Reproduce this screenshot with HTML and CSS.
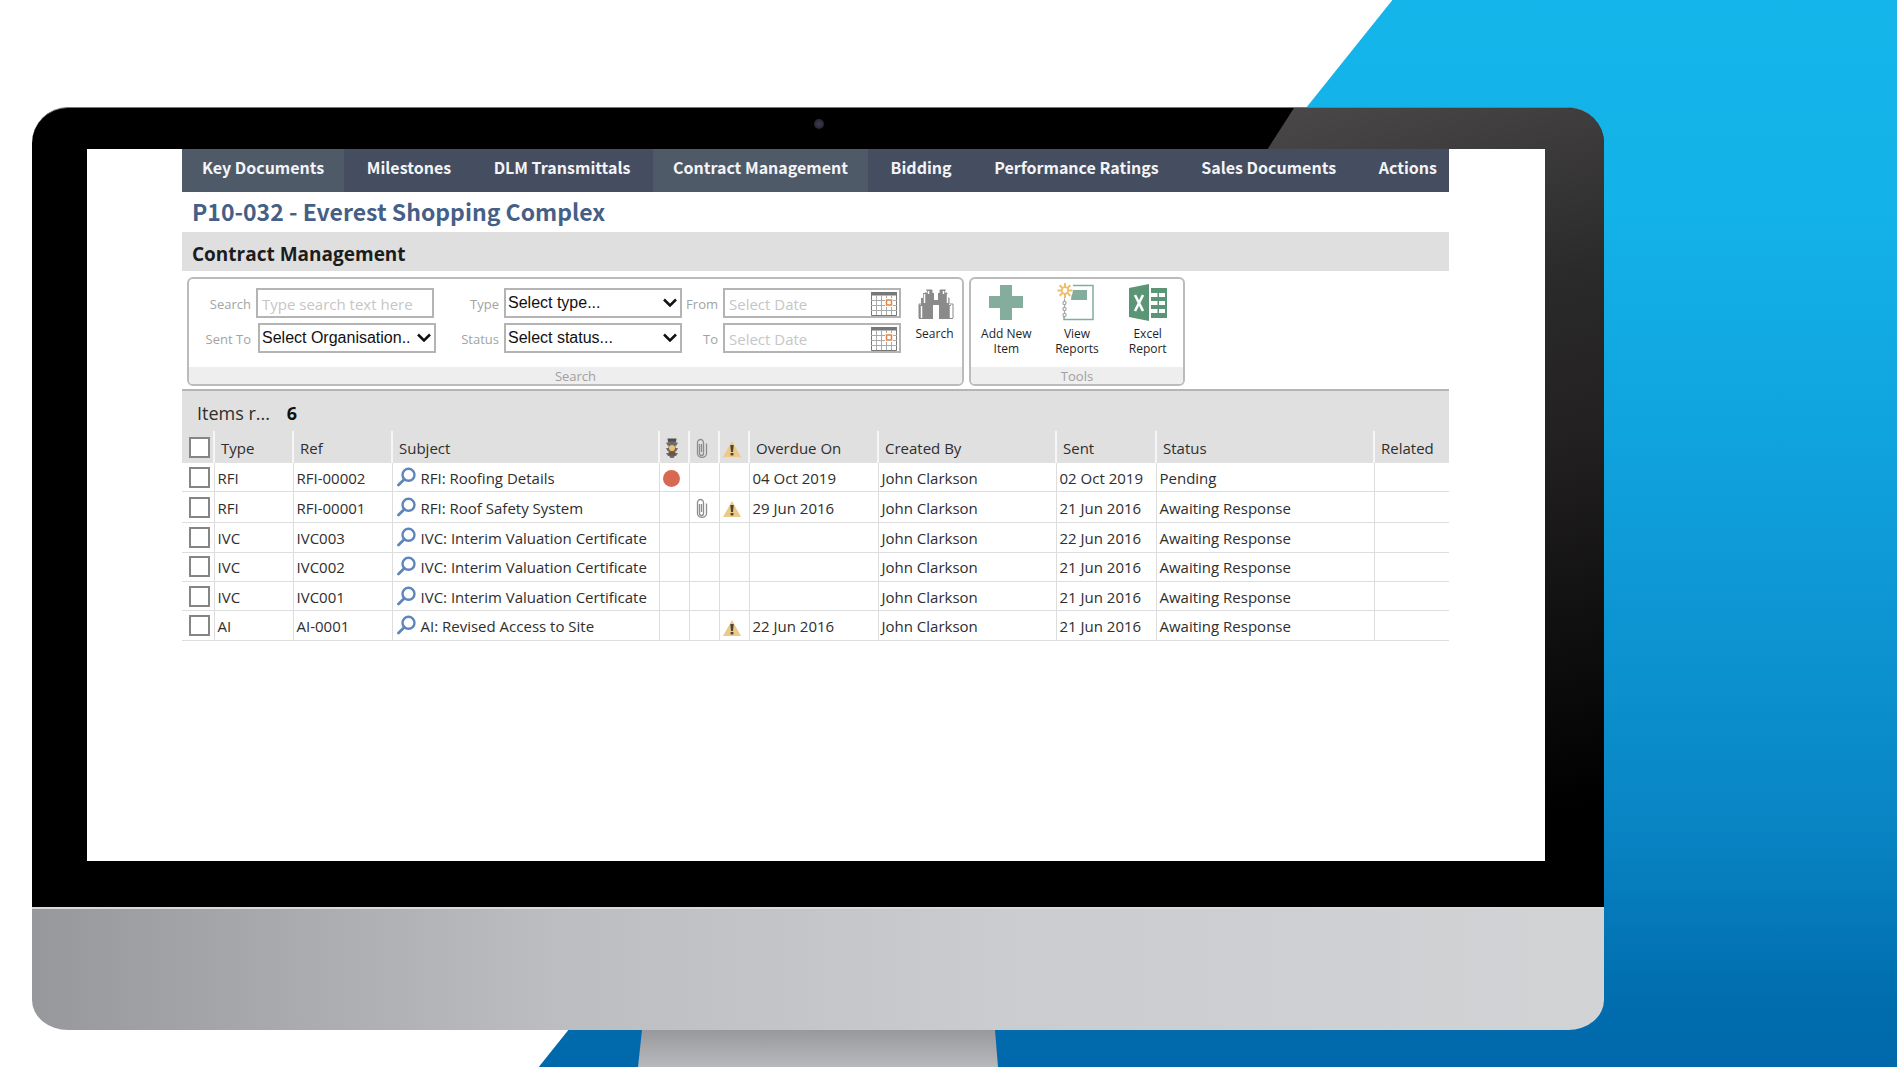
FILE: index.html
```html
<!DOCTYPE html>
<html lang="en">
<head>
<meta charset="utf-8">
<title>Contract Management</title>
<link rel="stylesheet" href="styles.css">
</head>
<body>
<svg class="defs" width="0" height="0" aria-hidden="true">
  <symbol id="lens" viewBox="0 0 20 20"><circle cx="11.500" cy="7.800" r="6" fill="none" stroke="#5f86bb" stroke-width="2.400"/><path d="M7.300 12.200 1.500 18" stroke="#5f86bb" stroke-width="2.800" stroke-linecap="round"/></symbol>
  <symbol id="warn" viewBox="0 0 18 16"><path d="M9 0 18 16H0Z" fill="#eac989"/><path d="M7.300 4h3.400l-.7 7H8Z" fill="#4d4436"/><rect x="7.600" y="12" width="2.800" height="2.400" fill="#4d4436"/></symbol>
  <symbol id="clip" viewBox="0 0 12 20"><path d="M3.500 6v9.500a2 2 0 0 0 4 0V4.500a3 3 0 0 0-6 0v11a4.500 3.800 0 0 0 9 0V5.500M5.500 6v8" fill="none" stroke="#8c8c8c" stroke-width="1.300"/></symbol>
  <symbol id="calendar" viewBox="0 0 26 24"><path d="M.5 1h25v22.500H.5z" fill="#fff" stroke="#777"/><path d="M0 0h26v3.500H0z" fill="#777"/><path d="M5.500 3v20M10.500 3v20M15.500 3v20M20.500 3v20M0 8.500h26M0 13.500h26M0 18.500h26" stroke="#aaa"/><rect x="14" y="6" width="8" height="9" fill="#fff"/><rect x="15.500" y="8" width="5" height="5" fill="#fff" stroke="#e8843c" stroke-width="1.500"/></symbol>
</svg>
<div class="backdrop"></div>
<main class="monitor">
  <div class="bezel">
    <div class="glare"></div>
    <div class="camera"></div>
    <div class="screen">
      <nav class="nav">
        <a class="lit" href="#">Key Documents</a>
        <a href="#">Milestones</a>
        <a href="#">DLM Transmittals</a>
        <a class="lit" href="#">Contract Management</a>
        <a href="#">Bidding</a>
        <a href="#">Performance Ratings</a>
        <a href="#">Sales Documents</a>
        <a href="#">Actions</a>
      </nav>
      <h1>P10-032 - Everest Shopping Complex</h1>
      <h2>Contract Management</h2>
      <div class="ribbon">
        <form class="panel search">
          <div class="panel-body">
            <div class="fields">
              <label for="q">Search</label>
              <input class="box" id="q" type="text" placeholder="Type search text here">
              <label for="type">Type</label>
              <span class="select"><select class="box" id="type"><option>Select type...</option></select><svg viewBox="0 0 14 9"><path d="m1 1.500 6 6 6-6"/></svg></span>
              <label for="from">From</label>
              <span class="box date"><input id="from" type="text" placeholder="Select Date"><svg><use href="#calendar"/></svg></span>
              <label for="org">Sent To</label>
              <span class="select org"><select class="box" id="org"><option>Select Organisation..</option></select><svg viewBox="0 0 14 9"><path d="m1 1.500 6 6 6-6"/></svg></span>
              <label for="status">Status</label>
              <span class="select"><select class="box" id="status"><option>Select status...</option></select><svg viewBox="0 0 14 9"><path d="m1 1.500 6 6 6-6"/></svg></span>
              <label for="to">To</label>
              <span class="box date"><input id="to" type="text" placeholder="Select Date"><svg><use href="#calendar"/></svg></span>
            </div>
            <button class="tool find" type="button">
              <svg viewBox="0 0 38 38"><path d="M11 6h5v3h2v7h4V9h2V6h5v3h2v5h2v7h2v14H23V21h-6v14H3V21h2v-7h2V9h4z" fill="#8a8a8a"/><path d="M10 6h6v3M7 20v-6h2V9h2M3 34V20h3M30 6h-6v3M33 20v-6h-2V9h-2M37 34V20h-3M3 34.500h12M37 34.500H25" fill="none" stroke="#8a8a8a"/><path d="M8.500 10v9M5.500 22v12M12.500 7v3M31.500 10v9M34.500 22v12M27.500 7v3" stroke="#fff" stroke-width="1.500"/></svg>
              Search
            </button>
          </div>
          <div class="caption">Search</div>
        </form>
        <section class="panel tools">
          <div class="panel-body">
            <button class="tool" type="button">
              <svg viewBox="0 0 38 38"><path d="M13 1h12v11h11v12H25v12H13V24H2V12h11z" fill="#84ad9d"/></svg>
              Add New<br>Item
            </button>
            <button class="tool" type="button">
              <svg viewBox="0 0 38 38"><path d="M15 1.500h20v34H6V33" fill="none" stroke="#7fae9b" stroke-width="1.500"/><path d="M14 6h15v10H13z" fill="#84ad9d"/><g fill="#fff" stroke="#a5aaa6" stroke-width="1.200"><circle cx="6.500" cy="19" r="1.600"/><circle cx="6.500" cy="25" r="1.600"/><circle cx="6.500" cy="31" r="1.600"/><path d="M6.500 14v3.400M6.500 20.600v2.800M6.500 26.600v2.800"/></g><circle cx="7" cy="6.500" r="8" fill="#fff"/><path d="M7-1v15M-.5 6.500h15M1.700 1.200l10.600 10.600M12.300 1.200 1.700 11.800" stroke="#f0be69" stroke-width="2"/><circle cx="7" cy="6.500" r="3.300" fill="#fff" stroke="#f0be69" stroke-width="1.800"/></svg>
              View<br>Reports
            </button>
            <button class="tool" type="button">
              <svg viewBox="0 0 38 38"><path d="M0 4 20 0v37L0 33z" fill="#5a9575"/><path d="m6 11 8 16M14 11 6 27" stroke="#fff" stroke-width="2.600"/><path d="M22 4h16v30H22z" fill="#5a9575"/><path d="M22 9h6.500v4H22zm8 0h6v4h-6zm-8 8h6.500v4H22zm8 0h6v4h-6zm-8 8h6.500v4H22zm8 0h6v4h-6z" fill="#fff"/></svg>
              Excel<br>Report
            </button>
          </div>
          <div class="caption">Tools</div>
        </section>
      </div>
      <div class="count">Items r... <b>6</b></div>
      <table class="items">
        <colgroup><col class="c-check"><col class="c-type"><col class="c-ref"><col><col class="c-icon"><col class="c-icon"><col class="c-icon"><col class="c-due"><col class="c-by"><col class="c-sent"><col class="c-status"><col class="c-rel"></colgroup>
        <thead>
          <tr><th><input type="checkbox" aria-label="Select all"></th><th>Type</th><th>Ref</th><th>Subject</th>
          <th class="ic"><svg class="light" viewBox="0 0 14 20"><path d="M2.500.5h9L11 4H3z" fill="#4f4f4f"/><path d="M1 4.500h12l-1.500 3h-9zM1 10h12l-1.500 3h-9zM1 15h12l-2 3h-8z" fill="#75685e"/><path d="M3.500 3.500h7V17l-2 3h-3l-2-3z" fill="#6a6a6a"/><path d="M4 14h6v3.500H4z" fill="#6f5548"/><circle cx="7" cy="10" r="3" fill="#ecc06c"/></svg></th>
          <th class="ic"><svg class="clip"><use href="#clip"/></svg></th><th class="ic"><svg class="warn"><use href="#warn"/></svg></th>
          <th>Overdue On</th><th>Created By</th><th>Sent</th><th>Status</th><th>Related</th></tr>
        </thead>
        <tbody>
          <tr><td><input type="checkbox" aria-label="Select RFI-00002"></td><td>RFI</td><td>RFI-00002</td><td><svg class="lens"><use href="#lens"/></svg>RFI: Roofing Details</td><td class="ic"><i class="dot"></i></td><td></td><td></td><td>04 Oct 2019</td><td>John Clarkson</td><td>02 Oct 2019</td><td>Pending</td><td></td></tr>
          <tr><td><input type="checkbox" aria-label="Select RFI-00001"></td><td>RFI</td><td>RFI-00001</td><td><svg class="lens"><use href="#lens"/></svg>RFI: Roof Safety System</td><td></td><td class="ic"><svg class="clip"><use href="#clip"/></svg></td><td class="ic"><svg class="warn"><use href="#warn"/></svg></td><td>29 Jun 2016</td><td>John Clarkson</td><td>21 Jun 2016</td><td>Awaiting Response</td><td></td></tr>
          <tr><td><input type="checkbox" aria-label="Select IVC003"></td><td>IVC</td><td>IVC003</td><td><svg class="lens"><use href="#lens"/></svg>IVC: Interim Valuation Certificate</td><td></td><td></td><td></td><td></td><td>John Clarkson</td><td>22 Jun 2016</td><td>Awaiting Response</td><td></td></tr>
          <tr><td><input type="checkbox" aria-label="Select IVC002"></td><td>IVC</td><td>IVC002</td><td><svg class="lens"><use href="#lens"/></svg>IVC: Interim Valuation Certificate</td><td></td><td></td><td></td><td></td><td>John Clarkson</td><td>21 Jun 2016</td><td>Awaiting Response</td><td></td></tr>
          <tr><td><input type="checkbox" aria-label="Select IVC001"></td><td>IVC</td><td>IVC001</td><td><svg class="lens"><use href="#lens"/></svg>IVC: Interim Valuation Certificate</td><td></td><td></td><td></td><td></td><td>John Clarkson</td><td>21 Jun 2016</td><td>Awaiting Response</td><td></td></tr>
          <tr><td><input type="checkbox" aria-label="Select AI-0001"></td><td>AI</td><td>AI-0001</td><td><svg class="lens"><use href="#lens"/></svg>AI: Revised Access to Site</td><td></td><td></td><td class="ic"><svg class="warn"><use href="#warn"/></svg></td><td>22 Jun 2016</td><td>John Clarkson</td><td>21 Jun 2016</td><td>Awaiting Response</td><td></td></tr>
        </tbody>
      </table>
    </div>
  </div>
  <div class="chin"></div>
  <div class="stand"></div>
</main>
</body>
</html>
```

FILE: styles.css
```css
* { box-sizing: border-box; }
body {
  margin: 0;
  min-height: 100vh;
  background: #fff;
  color: #2e2e2e;
  font: 15px/20px "Open Sans", "Noto Sans", sans-serif;
  position: relative;
  overflow: hidden;
}
.defs { position: absolute; }
.backdrop {
  position: absolute;
  inset: 0;
  background: linear-gradient(#14b5ea 0%, #13b2e8 20%, #0fa0dc 45%, #0985c4 77%, #006dae 94%, #0068ab 100%);
  clip-path: polygon(73.400% 0, 100% 0, 100% 100%, 28.400% 100%);
}

/* Monitor body */
.monitor {
  position: relative;
  display: flex;
  flex-direction: column;
  min-height: 100vh;
  padding: 107px 293px 0 32px;
}
.bezel {
  position: relative;
  padding: 42px 59px 46px 55px;
  background: #000;
  border-top: 1px solid #77777a;
  border-radius: 36px 36px 0 0;
  overflow: hidden;
  padding-top: 41px;
}
.glare {
  position: absolute;
  top: 0;
  right: 0;
  bottom: 0;
  width: 337px;
  background: linear-gradient(165deg, #4a4849 0, #2b2a2a 28%, #232122 45%, #000 88%);
  clip-path: polygon(27px 0, 100% 0, 100% 100%, 270px 100%, 270px 42px, 0 42px);
}
.camera {
  position: absolute;
  top: 11px;
  left: calc(50% - 4px);
  width: 10px;
  height: 10px;
  border-radius: 50%;
  background: radial-gradient(#3c3c52, #1d1d22);
}
.screen {
  position: relative;
  min-height: 712px;
  padding: 0 96px 0 95px;
  background: #fff;
}
.chin {
  height: 123px;
  border-top: 2px solid #d9d9db;
  border-radius: 0 0 36px 36px / 0 0 30px 30px;
  background: linear-gradient(90deg, #97989c, #bcbdc1 33%, #cbccd0 62%, #d2d3d5);
}
.stand {
  flex: 1;
  align-self: center;
  width: 360px;
  min-height: 37px;
  background: linear-gradient(#98999d, #b8b9bd);
  clip-path: polygon(4px 0, 357px 0, 100% 100%, 0 100%);
}

/* Page heading */
.nav { display: flex; justify-content: space-between; background: #444e60; height: 43px; }
.nav a {
  padding: 6px 20px 0;
  color: #f4f4f6;
  font: bold 16px/24px "Noto Sans CJK SC", sans-serif;
  text-decoration: none;
  white-space: nowrap;
}
.nav a.lit { background: #4f5a69; }
.nav a:last-child { padding-right: 12px; }
h1 {
  margin: 0;
  padding: 0 10px;
  height: 40px;
  color: #465f86;
  font: bold 23px/38px "Noto Sans CJK SC", sans-serif;
}
h2 {
  margin: 0;
  padding: 2px 10px 0;
  height: 39px;
  background: #dfdfdf;
  color: #1c1c1c;
  font-size: 19px;
  line-height: 40px;
}

/* Ribbon */
.ribbon { display: flex; gap: 5px; padding: 6px 5px 3px; border-bottom: 2px solid #b5b5b5; }
.panel {
  border: 2px solid #bbb;
  border-radius: 6px;
  overflow: hidden;
}
.search { width: 777px; }
.tools { width: 216px; }
.panel-body { display: flex; height: 88px; }
.caption { height: 17px; background: #eee; color: #a0a0a0; font-size: 13px; line-height: 18px; text-align: center; }
.fields {
  display: grid;
  grid-template-columns: 62px 178px 70px 178px 41px 183px;
  grid-auto-rows: 30px;
  row-gap: 5px;
  padding-top: 9px;
}
.fields label { color: #a3a3a3; font-size: 13px; line-height: 32px; text-align: right; }
.box {
  width: 178px;
  height: 30px;
  border: 2px solid #b4b4b4;
  border-radius: 0;
  background: #fff;
  padding: 2px 4px 0;
  font: 15px/20px "Open Sans", sans-serif;
}
.fields .box { margin-left: 5px; }
.fields .org .box { margin-left: 7px; }
::placeholder { color: #c6c6c6; opacity: 1; }
select.box { appearance: none; padding: 0 2px; color: #111; font: 16px/24px "Liberation Sans", sans-serif; }
.select { position: relative; }
.select svg { position: absolute; right: 0; top: 10px; width: 14px; height: 9px; fill: none; stroke: #111; stroke-width: 2.500px; }
.select.org svg { right: -2px; }
.date { display: flex; padding: 2px 2px 0 4px; }
.date input { flex: 1; min-width: 0; border: 0; padding: 0; background: none; font: inherit; }
.date svg { width: 26px; height: 24px; }
.tool {
  flex: 1;
  display: flex;
  flex-direction: column;
  align-items: center;
  padding: 5px 0 0;
  border: 0;
  background: none;
  color: #1f1f1f;
  font: 12px/15px "Open Sans", sans-serif;
}
.find { padding-left: 6px; }
.tool svg { width: 38px; height: 38px; margin-bottom: 4px; overflow: visible; }

/* Item list */
.count { height: 40px; padding: 0 15px; background: #e0e0e0; font-size: 18px; line-height: 44px; }
.count b { margin-left: 12px; color: #111; }
.items { width: 100%; height: 210px; border-collapse: collapse; table-layout: fixed; }
.c-check { width: 32px; }
.c-type { width: 79px; }
.c-ref { width: 99px; }
.c-icon { width: 30px; }
.c-due { width: 129px; }
.c-by { width: 178px; }
.c-sent { width: 100px; }
.c-status { width: 218px; }
.c-rel { width: 75px; }
.items th, .items td { padding: 1px 0 0 3px; text-align: left; font-weight: normal; white-space: nowrap; }
.items th { height: 32px; padding-left: 6px; background: #e0e0e0; border-right: 2px solid #f6f6f6; }
.items td { border-right: 1px solid #ddd; border-bottom: 1px solid #ddd; }
.items th:last-child, .items td:last-child { border-right: 0; }
.items th:first-child, .items td:first-child { padding: 0 0 0 7px; }
.items .ic { padding: 0 5px 0 0; text-align: center; }
.items svg, .items input, .dot { vertical-align: middle; }
.items input { appearance: none; display: block; width: 21px; height: 21px; margin: 0; border: 2px solid #858585; background: #fff; }
.items .lens { width: 20px; height: 20px; margin: -6px 4px 0 1px; }
.warn { width: 18px; height: 16px; }
.clip { width: 12px; height: 20px; }
.light { width: 14px; height: 20px; }
.dot { display: inline-block; width: 17px; height: 17px; border-radius: 50%; background: #d96853; }
```
